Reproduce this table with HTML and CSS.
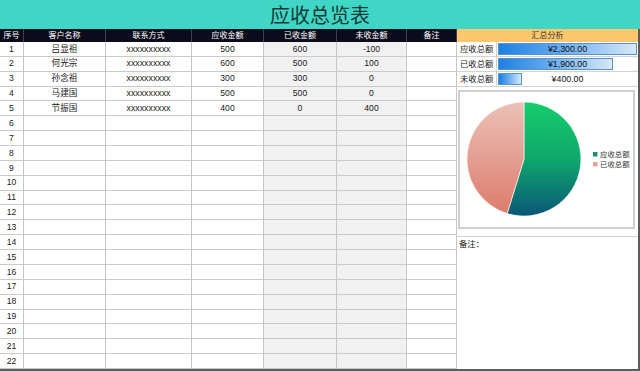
FILE: index.html
```html
<!DOCTYPE html>
<html lang="zh">
<head>
<meta charset="utf-8">
<title>应收总览表</title>
<link rel="stylesheet" href="styles.css">
</head>
<body>
<div class="page">
  <div class="title">应收总览表</div>
  <div class="main">
    <div class="sheet">
      <div class="h">序号</div><div class="h">客户名称</div><div class="h">联系方式</div><div class="h">应收金额</div><div class="h">已收金额</div><div class="h">未收金额</div><div class="h">备注</div>

      <div>1</div><div>吕显祖</div><div class="x">xxxxxxxxxx</div><div>500</div><div class="g">600</div><div class="g">-100</div><div></div>
      <div>2</div><div>何光宗</div><div class="x">xxxxxxxxxx</div><div>600</div><div class="g">500</div><div class="g">100</div><div></div>
      <div>3</div><div>孙念祖</div><div class="x">xxxxxxxxxx</div><div>300</div><div class="g">300</div><div class="g">0</div><div></div>
      <div>4</div><div>马建国</div><div class="x">xxxxxxxxxx</div><div>500</div><div class="g">500</div><div class="g">0</div><div></div>
      <div>5</div><div>节振国</div><div class="x">xxxxxxxxxx</div><div>400</div><div class="g">0</div><div class="g">400</div><div></div>
      <div>6</div><div></div><div></div><div></div><div class="g"></div><div class="g"></div><div></div>
      <div>7</div><div></div><div></div><div></div><div class="g"></div><div class="g"></div><div></div>
      <div>8</div><div></div><div></div><div></div><div class="g"></div><div class="g"></div><div></div>
      <div>9</div><div></div><div></div><div></div><div class="g"></div><div class="g"></div><div></div>
      <div>10</div><div></div><div></div><div></div><div class="g"></div><div class="g"></div><div></div>
      <div>11</div><div></div><div></div><div></div><div class="g"></div><div class="g"></div><div></div>
      <div>12</div><div></div><div></div><div></div><div class="g"></div><div class="g"></div><div></div>
      <div>13</div><div></div><div></div><div></div><div class="g"></div><div class="g"></div><div></div>
      <div>14</div><div></div><div></div><div></div><div class="g"></div><div class="g"></div><div></div>
      <div>15</div><div></div><div></div><div></div><div class="g"></div><div class="g"></div><div></div>
      <div>16</div><div></div><div></div><div></div><div class="g"></div><div class="g"></div><div></div>
      <div>17</div><div></div><div></div><div></div><div class="g"></div><div class="g"></div><div></div>
      <div>18</div><div></div><div></div><div></div><div class="g"></div><div class="g"></div><div></div>
      <div>19</div><div></div><div></div><div></div><div class="g"></div><div class="g"></div><div></div>
      <div>20</div><div></div><div></div><div></div><div class="g"></div><div class="g"></div><div></div>
      <div>21</div><div></div><div></div><div></div><div class="g"></div><div class="g"></div><div></div>
      <div>22</div><div></div><div></div><div></div><div class="g"></div><div class="g"></div><div></div>
    </div>

    <div class="panel">
      <div class="panel-head">汇总分析</div>
      <div class="sum-row">
        <div class="sum-label">应收总额</div>
        <div class="sum-val"><div class="bar" style="width:100%"></div><span class="sum-num">¥2,300.00</span></div>
      </div>
      <div class="sum-row">
        <div class="sum-label">已收总额</div>
        <div class="sum-val"><div class="bar" style="width:82.6%"></div><span class="sum-num">¥1,900.00</span></div>
      </div>
      <div class="sum-row">
        <div class="sum-label">未收总额</div>
        <div class="sum-val"><div class="bar" style="width:17.4%"></div><span class="sum-num">¥400.00</span></div>
      </div>
      <div class="chart">
        <svg class="chart-svg" viewBox="0 0 173 135" width="173" height="135">
          <defs>
            <linearGradient id="gGreen" x1="0" y1="0" x2="0" y2="1">
              <stop offset="0" stop-color="#16cc6b"/>
              <stop offset="0.5" stop-color="#0fa86d"/>
              <stop offset="1" stop-color="#0a5676"/>
            </linearGradient>
            <linearGradient id="gSalmon" x1="0" y1="0" x2="0" y2="1">
              <stop offset="0" stop-color="#ebc1b8"/>
              <stop offset="1" stop-color="#dd7c6c"/>
            </linearGradient>
          </defs>
          <path d="M64,67 L64,10 A57,57 0 1 1 47.2,121.5 Z" fill="url(#gGreen)" stroke="#fff" stroke-width="0.6"/>
          <path d="M64,67 L47.2,121.5 A57,57 0 0 1 64,10 Z" fill="url(#gSalmon)" stroke="#fff" stroke-width="0.6"/>
          <rect x="133" y="60" width="4.5" height="4.5" fill="#13946a"/>
          <text x="140" y="65" class="legend">应收总额</text>
          <rect x="133" y="70" width="4.5" height="4.5" fill="#e3a295"/>
          <text x="140" y="75" class="legend">已收总额</text>
        </svg>
      </div>
      <div class="notes">备注：</div>
    </div>
  </div>
</div>
</body>
</html>
```

FILE: styles.css
```css
* {
  box-sizing: border-box;
  margin: 0;
  padding: 0;
}

body {
  width: 640px;
  height: 371px;
  overflow: hidden;
  background: #ffffff;
  font-family: "Liberation Sans", "Noto Sans CJK SC", sans-serif;
  color: #222;
}

.page {
  display: grid;
  grid-template-rows: 29px 342px;
  width: 640px;
}

.title {
  background: #40d6c5;
  display: flex;
  align-items: center;
  justify-content: center;
  font-family: "Noto Sans CJK SC", sans-serif;
  font-size: 20px;
  color: #183a36;
  line-height: 1;
}

.main {
  display: grid;
  grid-template-columns: 457px 181px;
  border-right: 2px solid #5c5c5c;
  border-bottom: 2px solid #5c5c5c;
}

.sheet {
  display: grid;
  grid-template-columns: 24px 82px 86px 72px 73px 70px 50px;
  grid-template-rows: 13px repeat(22, 1fr);
}

.sheet > div {
  display: flex;
  align-items: center;
  justify-content: center;
  border-right: 1px solid #c6c6c6;
  border-bottom: 1px solid #cacaca;
  font-size: 8.6px;
  line-height: 1;
  color: #1a1a1a;
  white-space: nowrap;
}

.sheet > .h {
  background: #0b0b1c;
  color: #ffffff;
  font-size: 8px;
  border-right-color: #3e3e4e;
  border-bottom: none;
}

.sheet > .g {
  background: #f1f1f1;
}

.sheet > .x {
  font-size: 8.8px;
}

.panel {
  display: flex;
  flex-direction: column;
  min-width: 0;
}

.panel-head {
  height: 13px;
  background: #fdc86d;
  display: flex;
  align-items: center;
  justify-content: center;
  font-size: 8px;
  color: #333;
  line-height: 1;
}

.sum-row {
  display: grid;
  grid-template-columns: 40px 1fr;
  height: 15px;
  border-bottom: 1px solid #d2d2d2;
}

.sum-label {
  display: flex;
  align-items: center;
  padding-left: 3px;
  font-size: 8.4px;
  border-right: 1px solid #d2d2d2;
  line-height: 1;
  color: #1a1a1a;
}

.sum-val {
  position: relative;
  padding: 1px;
  display: flex;
  align-items: stretch;
}

.bar {
  background: linear-gradient(to right, #1c80e3 0%, #5ea6ee 40%, #d8e9fb 100%);
  border: 1px solid #5592cf;
}

.sum-num {
  position: absolute;
  inset: 0;
  display: flex;
  align-items: center;
  justify-content: center;
  font-size: 8.8px;
  color: #111;
  line-height: 1;
}

.chart {
  margin: 3px 3px 0 1px;
  height: 139px;
  border: 2px solid #cfcfcf;
  background: #ffffff;
}

.chart-svg {
  display: block;
}

.legend {
  font-family: "Noto Sans CJK SC", sans-serif;
  font-size: 7.4px;
  fill: #333;
}

.notes {
  margin-top: 7px;
  border-top: 1px solid #d2d2d2;
  padding: 3px 0 0 2px;
  font-size: 8.4px;
  line-height: 1;
  color: #1a1a1a;
  flex: 1;
}
```
